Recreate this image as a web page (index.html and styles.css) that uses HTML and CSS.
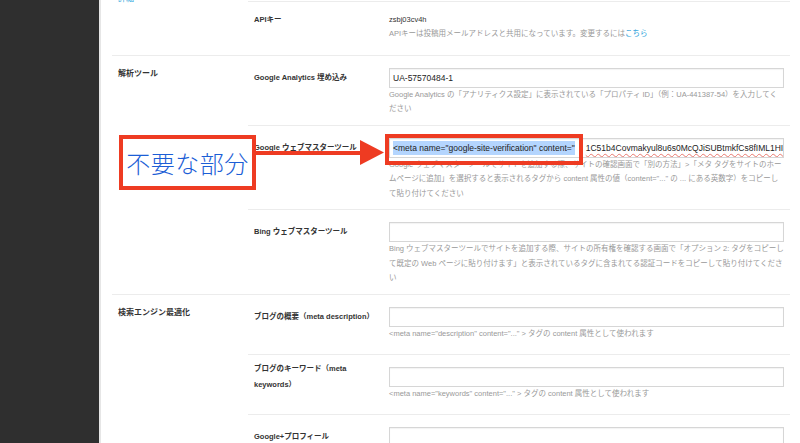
FILE: index.html
```html
<!DOCTYPE html>
<html lang="ja">
<head>
<meta charset="utf-8">
<title>ブログ設定</title>
<link rel="stylesheet" href="styles.css">
</head>
<body>
<div class="layout">
  <aside class="sidebar"></aside>
  <main class="main">
    <section class="section first">
      <div class="sec-label"><a class="sec-link">詳細</a></div>
      <div class="rows">
        <div class="row plain cont">
          <div class="row-label"><span>APIキー</span></div>
          <div class="field">
            <div class="value">zsbj03cv4h</div>
            <p class="help">APIキーは投稿用メールアドレスと共用になっています。変更するには<a class="link">こちら</a></p>
          </div>
        </div>
      </div>
    </section>

    <section class="section">
      <div class="sec-label"><h2>解析ツール</h2></div>
      <div class="rows">
        <div class="row">
          <div class="row-label"><span>Google Analytics 埋め込み</span></div>
          <div class="field">
            <div class="input">UA-57570484-1</div>
            <p class="help">Google Analytics の「アナリティクス設定」に表示されている「プロパティ ID」（例：UA-441387-54）を入力してください</p>
          </div>
        </div>
        <div class="row">
          <div class="row-label"><span>Google ウェブマスターツール</span></div>
          <div class="field">
            <div class="input"><span class="sel">&lt;meta name="google-site-verification" content="</span><span class="rest">1C51b4Covmakyul8u6s0McQJiSUBtmkfCs8fIML1HI" /&gt;</span></div>
            <p class="help">Google ウェブマスターツールでサイトを追加する際、サイトの確認画面で「別の方法」&gt;「メタ タグをサイトのホームページに追加」を選択すると表示されるタグから content 属性の値（content="..." の ... にある英数字）をコピーして貼り付けてください</p>
          </div>
        </div>
        <div class="row">
          <div class="row-label"><span>Bing ウェブマスターツール</span></div>
          <div class="field">
            <div class="input"></div>
            <p class="help">Bing ウェブマスターツールでサイトを追加する際、サイトの所有権を確認する画面で「オプション 2: タグをコピーして既定の Web ページに貼り付けます」と表示されているタグに含まれてる認証コードをコピーして貼り付けてください</p>
          </div>
        </div>
      </div>
    </section>

    <section class="section">
      <div class="sec-label"><h2>検索エンジン最適化</h2></div>
      <div class="rows">
        <div class="row">
          <div class="row-label"><span>ブログの概要（meta description）</span></div>
          <div class="field">
            <div class="input"></div>
            <p class="help">&lt;meta name="description" content="..." &gt; タグの content 属性として使われます</p>
          </div>
        </div>
        <div class="row">
          <div class="row-label"><span>ブログのキーワード（meta keywords）</span></div>
          <div class="field">
            <div class="input"></div>
            <p class="help">&lt;meta name="keywords" content="..." &gt; タグの content 属性として使われます</p>
          </div>
        </div>
        <div class="row">
          <div class="row-label"><span>Google+プロフィール</span></div>
          <div class="field">
            <div class="input"></div>
            <p class="help">Google+ のプロフィール URL を入力してください</p>
          </div>
        </div>
      </div>
    </section>
  </main>

  <div class="note-box">不要な部分</div>
  <svg class="arrow" width="132" height="30" viewBox="0 0 132 30">
    <rect x="0" y="13" width="110" height="4" fill="#ee3b22"/>
    <polygon points="106,2 130,14.5 106,27" fill="#ee3b22"/>
  </svg>
  <div class="mark-box"></div>
</div>
</body>
</html>
```

FILE: styles.css
```css
html, body {
  margin: 0;
  padding: 0;
  background: #fff;
}

body {
  width: 800px;
  height: 443px;
  overflow: hidden;
  font-family: "Liberation Sans", "Noto Sans CJK JP", sans-serif;
  color: #333;
}

.layout {
  position: relative;
  display: flex;
  width: 800px;
  height: 443px;
}

.sidebar {
  width: 99px;
  flex-shrink: 0;
  background: #2f2f2f;
}

.main {
  flex: 1;
  min-width: 0;
  border-left: 2px solid #e6e6e6;
  padding: 1px 10px 0 11px;
}

.section {
  display: flex;
}

.section + .section {
  border-top: 1px solid #ececec;
}

.sec-label {
  width: 136px;
  flex-shrink: 0;
  box-sizing: border-box;
  padding: 10.5px 0 0 6px;
}

.sec-label h2 {
  margin: 0;
  font-size: 8px;
  line-height: 15px;
  font-weight: bold;
  color: #333;
}

.section.first .sec-label {
  padding-top: 0;
}

.sec-link {
  display: block;
  margin-top: -10px;
  font-size: 8px;
  line-height: 15px;
  color: #2a9fdb;
}

.rows {
  flex: 1;
  min-width: 0;
}

.row {
  display: flex;
  padding: 12px 6px 8px 0;
  border-top: 1px solid #ececec;
}

.rows .row:first-child {
  border-top: 0;
}

.rows .row.cont {
  border-top: 1px solid #ececec;
}

.row.plain {
  padding-top: 10px;
  padding-bottom: 13px;
}

.row-label {
  width: 141px;
  flex-shrink: 0;
  box-sizing: border-box;
  padding-left: 6px;
  padding-right: 8px;
  height: 20px;
  display: flex;
  align-items: center;
  font-size: 7.5px;
  line-height: 16px;
  font-weight: bold;
  color: #333;
}

.row.plain .row-label {
  height: 15px;
}

.field {
  flex: 1;
  min-width: 0;
}

.value {
  font-size: 7.5px;
  line-height: 15px;
  color: #333;
}

.input {
  height: 20px;
  box-sizing: border-box;
  border: 1px solid #d6d6d6;
  box-shadow: inset 0 1px 1px rgba(0, 0, 0, 0.05);
  padding: 0 3px;
  font-size: 8.5px;
  line-height: 18px;
  color: #222;
  white-space: nowrap;
  overflow: hidden;
}

.sel {
  display: inline-block;
  line-height: 14px;
  vertical-align: middle;
  background: #b4d5fe;
}

.rest {
  display: inline-block;
  vertical-align: middle;
  line-height: 14px;
  margin-left: 11px;
  text-decoration: underline wavy #e8786e;
  text-decoration-thickness: 1px;
  text-underline-offset: 2px;
}

.help {
  margin: 0;
  min-height: 19px;
  font-size: 7.5px;
  line-height: 14.5px;
  color: #999;
}

.row.plain .help {
  min-height: 0;
}

.link {
  color: #2a9fdb;
}

/* annotation overlays */
.note-box {
  position: absolute;
  left: 119px;
  top: 135px;
  width: 137px;
  height: 55px;
  box-sizing: border-box;
  border: 4px solid #ee3b22;
  background: #fff;
  display: flex;
  align-items: center;
  justify-content: center;
  font-family: "Noto Sans CJK JP", sans-serif;
  font-size: 24px;
  font-weight: 300;
  letter-spacing: 0.5px;
  color: #1c5ed6;
}

.arrow {
  position: absolute;
  left: 254px;
  top: 138px;
}

.mark-box {
  position: absolute;
  left: 385px;
  top: 134px;
  width: 198px;
  height: 31px;
  box-sizing: border-box;
  border: 4px solid #ee3b22;
}
```
